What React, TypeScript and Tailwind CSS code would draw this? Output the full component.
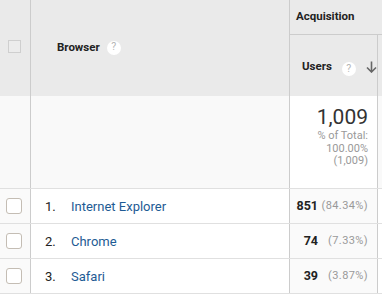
import React from "react";

const Help = () => (
  <span className="inline-flex items-center justify-center w-[14px] h-[14px] rounded-full bg-white text-[10.5px] text-[#b5b5b5] font-normal leading-none">?</span>
);

const Check = ({ header }: { header?: boolean }) =>
  header ? (
    <div className="w-[13px] h-[13px] border border-[#cfcfcf] bg-[#ececec]" />
  ) : (
    <div className="w-[16px] h-[16px] border border-[#c4bdb4] rounded-[3px] bg-white" />
  );

const rows = [
  { n: "1.", name: "Internet Explorer", users: "851", pct: "(84.34%)" },
  { n: "2.", name: "Chrome", users: "74", pct: "(7.33%)" },
  { n: "3.", name: "Safari", users: "39", pct: "(3.87%)" },
];

export default function App() {
  return (
    <div className="w-[382px] h-[297px] overflow-hidden bg-white text-[#222] font-['Roboto',sans-serif]">
      {/* Header */}
      <div className="flex h-[96px] bg-[#eaeaea]">
        <div className="w-[31px] shrink-0 border-r border-[#cccccc] flex items-center pl-[8px] pb-[3px]">
          <Check header />
        </div>
        <div className="w-[259px] shrink-0 border-r border-[#cccccc] flex items-center pl-[26px] gap-[7px] pb-[1px]">
          <span className="text-[11.5px] font-bold text-[#222]">Browser</span>
          <Help />
        </div>
        <div className="flex-1 flex flex-col">
          <div className="h-[35px] border-b border-[#cccccc] flex items-center pl-[6px]">
            <span className="text-[11.5px] font-bold">Acquisition</span>
          </div>
          <div className="flex-1 flex">
            <div className="w-[88px] shrink-0 border-r border-[#cccccc] flex items-center pl-[12px] pt-[3px]">
              <span className="text-[11.5px] font-bold">Users</span>
              <span className="ml-[10px]"><Help /></span>
              <svg className="ml-[10px]" width="11" height="12" viewBox="0 0 11 12">
                <path d="M5.5 0.5 V10.5 M1 6.5 L5.5 11 L10 6.5" stroke="#666" strokeWidth="1.6" fill="none" />
              </svg>
            </div>
          </div>
        </div>
      </div>
      {/* Total row */}
      <div className="flex h-[93px] bg-[#f9f9f9] border-b border-[#e0e0e0]">
        <div className="w-[31px] shrink-0 border-r border-[#cccccc]" />
        <div className="w-[259px] shrink-0 border-r border-[#cccccc]" />
        <div className="w-[88px] shrink-0 border-r border-[#cccccc] bg-white flex flex-col items-end pr-[9px] pt-[9px]">
          <span className="text-[21px] leading-[24px] text-[#333]">1,009</span>
          <span className="text-[11px] leading-[12.5px] text-[#999] text-right mt-[1px]">
            % of Total:
            <br />
            100.00%
            <br />
            (1,009)
          </span>
        </div>
        <div className="flex-1" />
      </div>
      {/* Data rows */}
      {rows.map((r) => (
        <div key={r.n} className="flex h-[35px] border-b border-[#e0e0e0]">
          <div className="w-[31px] shrink-0 border-r border-[#cccccc] bg-[#fafafa] flex items-center pl-[6px]">
            <Check />
          </div>
          <div className="w-[259px] shrink-0 border-r border-[#cccccc] flex items-center pt-[1px]">
            <span className="w-[40px] pl-[14px] text-[13px] text-[#222]">{r.n}</span>
            <span className="text-[13px] text-[#1e5b94]">{r.name}</span>
          </div>
          <div className="w-[88px] shrink-0 border-r border-[#cccccc] bg-[#fafafa] flex items-center justify-end pr-[9px] pt-[1px]">
            <span className="text-[12.5px] font-bold text-[#222]">{r.users}</span>
            <span className="w-[50px] text-right text-[11px] tracking-[0.4px] text-[#999]">{r.pct}</span>
          </div>
          <div className="flex-1" />
        </div>
      ))}
    </div>
  );
}
